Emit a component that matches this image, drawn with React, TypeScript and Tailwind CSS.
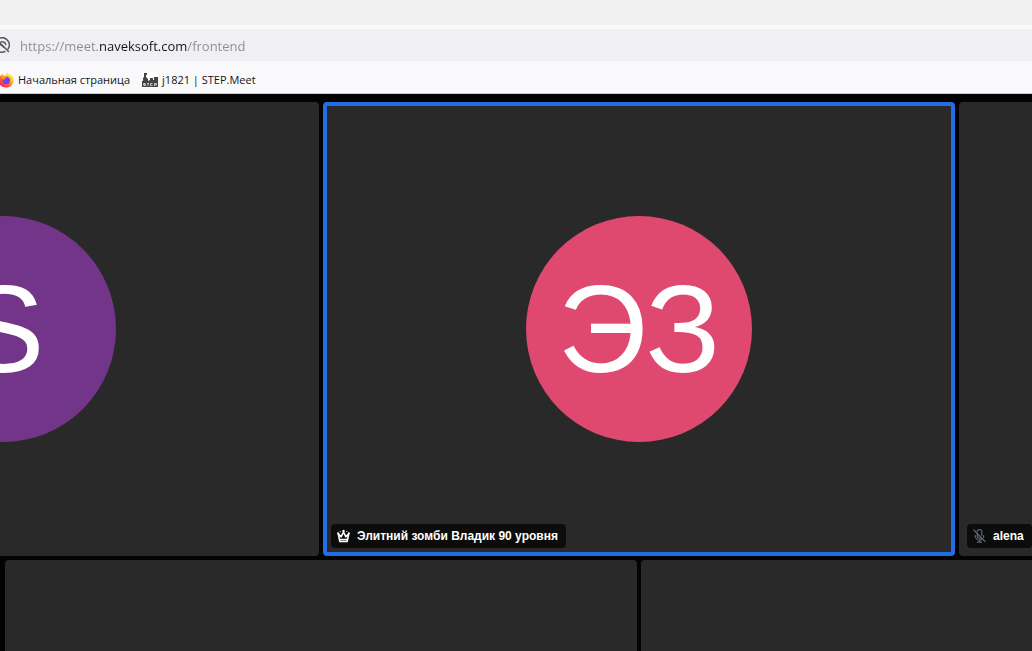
import type { ReactNode } from 'react';

function BlockedIcon() {
  return (
    <svg viewBox="0 0 16 16" className="size-4 shrink-0" fill="none" stroke="#5b5b66" strokeWidth="1.5" strokeLinecap="round" aria-hidden="true">
      <path d="M5.500 1.200A7.200 7.200 0 0 1 14 12M11 14.500A7.200 7.200 0 0 1 2.200 3.800" />
      <path d="M1.500 1.500l13 13" />
      <path d="M6.500 5.200c2-1 4.500-.2 5.300 2.300" />
      <path d="M4 9l2.500-1.500 3.500 3" />
    </svg>
  );
}

function FirefoxIcon() {
  return (
    <svg viewBox="0 0 16 16" className="size-4 shrink-0" aria-hidden="true">
      <defs>
        <linearGradient id="fire" x1="0.85" y1="0.1" x2="0.2" y2="0.95">
          <stop offset="0" stopColor="#fff044" />
          <stop offset="0.35" stopColor="#ffbd2e" />
          <stop offset="0.65" stopColor="#ff5b36" />
          <stop offset="1" stopColor="#f0216e" />
        </linearGradient>
      </defs>
      <path d="M9.500 0.500c.3 1.300 1.400 2 2.300 3 .4-.1.400-.8.300-1.200C14.400 3.800 15.700 6 15.600 8.500 15.500 12.500 12.200 15.600 8 15.600S.4 12.400.4 8.300C.4 6 1.300 4.300 2.300 3l.4 1.200C3.300 3 4.200 2 5.200 1.500 5 2.500 5.300 3.300 6 3.800 7.500 3.700 8.700 2.300 9.500.5z" fill="url(#fire)" />
      <circle cx="8.300" cy="8.400" r="3.700" fill="#7542e5" />
      <path d="M3.500 5c1.500-.8 3-.6 4.200.3l1 .5c-.3.800-1.500.6-1.900 1.200-.4.700-.6 1-.9 1.300C5.200 7.200 4.600 6.500 3.500 5z" fill="#ff8b2e" />
    </svg>
  );
}

function StepIcon() {
  return (
    <svg viewBox="0 0 16 16" className="size-4 shrink-0" aria-hidden="true">
      <path fill="#fff" d="M0 0h16v16H0z" />
      <path fill="#444" d="M2 1h3v2H4v2l2 2v2l2-1V6h3v2h1V5h4v10H0V9h1V6l1-1z" />
      <path fill="none" stroke="#e5e5e5" strokeWidth=".8" d="M3.500 11.500h-2v1h2v1h-2M5 11.500h2M6 11.500v2.500M10.500 11.500h-2v2h2M12.500 14v-2.500h2v1.500h-2" />
    </svg>
  );
}

function CrownIcon() {
  return (
    <svg viewBox="0 0 14 14" className="size-3.5 shrink-0" fill="none" stroke="#fff" strokeWidth="1.600" strokeLinejoin="round" aria-hidden="true">
      <path d="M1.300 4.800l1.500 7.600h7.400l1.500-7.600L8.900 7.800 6.500 3 4.100 7.800z" />
      <path d="M2.700 10.400h7.600" strokeWidth="1.200" />
      <g fill="#fff" stroke="none">
        <circle cx="6.500" cy="1.900" r="1.200" />
        <circle cx="1.100" cy="4.300" r="1.100" />
        <circle cx="11.900" cy="4.300" r="1.100" />
        <circle cx="3.200" cy="2.500" r=".6" />
        <circle cx="9.800" cy="2.500" r=".6" />
      </g>
    </svg>
  );
}

function MutedIcon() {
  return (
    <svg viewBox="0 0 14 14" className="size-3.5 shrink-0" fill="none" stroke="#5f6773" strokeWidth="1.200" strokeLinecap="round" aria-hidden="true">
      <path d="M.8 1l11.200 11.500" />
      <path d="M4.200 3V2.800a2.300 2.300 0 0 1 4.600 0v3.600M4.200 4.800v2a2.300 2.300 0 0 0 3.500 2" />
      <path d="M2.200 6.500a4.300 4.300 0 0 0 6.800 3.700M10.800 6.500a4.300 4.300 0 0 1-.5 2M6.500 11v2M4.500 13.200h4" />
    </svg>
  );
}

type TileProps = {
  initials?: string;
  color?: string;
  name?: string;
  icon?: ReactNode;
  active?: boolean;
  className?: string;
};

function Tile({ initials, color = '', name, icon, active = false, className = '' }: TileProps) {
  return (
    <section
      className={`relative col-span-2 flex items-center justify-center rounded-[4px] border-4 bg-[#292929] ${
        active ? 'border-[#236ee8]' : 'border-[#292929]'
      } ${className}`}
    >
      {initials && (
        <div className={`flex size-[226px] items-center justify-center rounded-full text-[124px] leading-none text-white ${color}`}>
          {initials}
        </div>
      )}
      {name && (
        <div className="absolute bottom-1 left-1 flex h-6 items-center gap-1.5 rounded-[4px] bg-[#0c0c0c] px-1.5 text-[12px] font-bold whitespace-nowrap text-white">
          {icon}
          <span className="pr-0.5">{name}</span>
        </div>
      )}
    </section>
  );
}

export default function App() {
  return (
    <div className="flex h-screen flex-col overflow-hidden bg-[#030303] font-['Liberation_Sans',Arial,sans-serif]">
      <header className="shrink-0 border-b border-[#cccccc] bg-[#f9f9fb] font-['Open_Sans','Noto_Sans',sans-serif] text-[#15141a]">
        <div className="h-[25px] bg-[#f0f0f0]" />
        <div className="mt-1 flex h-8 items-center bg-[#f0f0f4]">
          <span className="-ml-1.5 flex">
            <BlockedIcon />
          </span>
          <input
            type="text"
            aria-label="Адрес"
            defaultValue="https://meet.naveksoft.com/frontend"
            spellCheck={false}
            className="ml-2.5 h-8 min-w-0 flex-1 bg-[linear-gradient(to_right,#8a8a90_79px,#15141a_79px,#15141a_167px,#8a8a90_167px)] bg-clip-text pt-0.5 text-[13px] text-transparent caret-[#15141a] outline-none"
          />
        </div>
        <nav className="flex h-8 items-center gap-3 pt-1.5 text-[11px] whitespace-nowrap">
          <a href="#home" className="-ml-0.5 flex items-center gap-1">
            <FirefoxIcon />
            Начальная страница
          </a>
          <a href="#meet" className="flex items-center gap-1">
            <StepIcon />
            j1821 | STEP.Meet
          </a>
        </nav>
      </header>
      <main className="-mr-[559px] -ml-[313px] grid shrink-0 auto-rows-[454px] grid-cols-6 gap-1 pt-2">
        <Tile initials="S" color="bg-[#733589]" />
        <Tile initials="ЭЗ" color="bg-[#df496f]" name="Элитний зомби Владик 90 уровня" icon={<CrownIcon />} active />
        <Tile name="alena" icon={<MutedIcon />} />
        <Tile className="col-start-2" />
        <Tile />
      </main>
    </div>
  );
}
